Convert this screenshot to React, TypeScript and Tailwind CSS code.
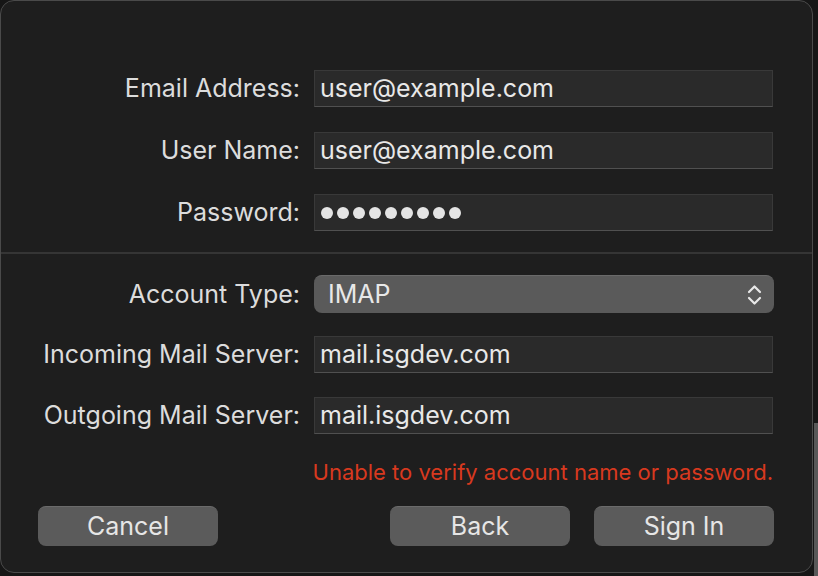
import React from 'react';

const font = { fontFamily: 'Inter, "Noto Sans", sans-serif' };

const Field: React.FC<{ label: string; children: React.ReactNode }> = ({ label, children }) => (
  <div className="flex items-center h-[37px]">
    <div className="w-[300px] pr-[1px] text-right text-[25px] leading-[37px] text-[#dcdcdc]">{label}</div>
    <div className="ml-[13px] w-[459px] h-[37px] flex items-center pl-[5px] bg-[#2a2a2a] border border-[#393939] border-b-[#505050] text-[25px] leading-none text-[#e8e8e8]">
      {children}
    </div>
  </div>
);

export default function App() {
  return (
    <div className="relative w-[818px] h-[576px] bg-[#161616] overflow-hidden" style={font}>
      <div className="absolute right-0 top-[423px] bottom-0 w-[4px] bg-[#585858]" />
      <div className="w-[813px] h-[573px] rounded-[14px] border border-[#4a4a4a] bg-[#1e1e1e] flex flex-col">
        <div className="pt-[69px] flex flex-col gap-[25px]">
          <Field label="Email Address:">user@example.com</Field>
          <Field label="User Name:">user@example.com</Field>
          <Field label="Password:">
            <div className="flex gap-[4px] pl-[1px]">
              {Array.from({ length: 9 }).map((_, i) => (
                <span key={i} className="w-[12px] h-[12px] rounded-full bg-[#e4e4e4]" />
              ))}
            </div>
          </Field>
        </div>

        <div className="mt-[21px] h-[2px] bg-[#353535]" />

        <div className="mt-[21px] flex items-center h-[38px]">
          <div className="w-[300px] pr-[1px] text-right text-[25px] leading-[38px] text-[#dcdcdc]">Account Type:</div>
          <div className="ml-[13px] w-[460px] h-[38px] rounded-[8px] bg-[#5a5a5a] border-t border-[#6a6a6a] flex items-center justify-between pl-[14px] pr-[12px] text-[25px] leading-none text-[#e8e8e8]">
            <span>IMAP</span>
            <svg width="15" height="24" viewBox="0 0 15 24" fill="none" stroke="#e8e8e8" strokeWidth="2.2" strokeLinecap="round" strokeLinejoin="round">
              <path d="M2 9 L7.5 3.5 L13 9" />
              <path d="M2 15 L7.5 20.5 L13 15" />
            </svg>
          </div>
        </div>

        <div className="mt-[23px] flex flex-col gap-[24px]">
          <Field label="Incoming Mail Server:">mail.isgdev.com</Field>
          <Field label="Outgoing Mail Server:">mail.isgdev.com</Field>
        </div>

        <div className="mt-[26px] h-[24px] w-[772px] text-right text-[22px] leading-[24px] text-[#d8391f]">
          Unable to verify account name or password.
        </div>

        <div className="mt-[22px] flex items-center pl-[37px]">
          <button className="w-[180px] h-[40px] rounded-[8px] bg-[#5b5b5b] border-t border-[#6b6b6b] text-[25px] leading-none text-[#e6e6e6]">Cancel</button>
          <button className="ml-[172px] w-[180px] h-[40px] rounded-[8px] bg-[#5b5b5b] border-t border-[#6b6b6b] text-[25px] leading-none text-[#e6e6e6]">Back</button>
          <button className="ml-[24px] w-[180px] h-[40px] rounded-[8px] bg-[#5b5b5b] border-t border-[#6b6b6b] text-[25px] leading-none text-[#e6e6e6]">Sign In</button>
        </div>
      </div>
    </div>
  );
}
